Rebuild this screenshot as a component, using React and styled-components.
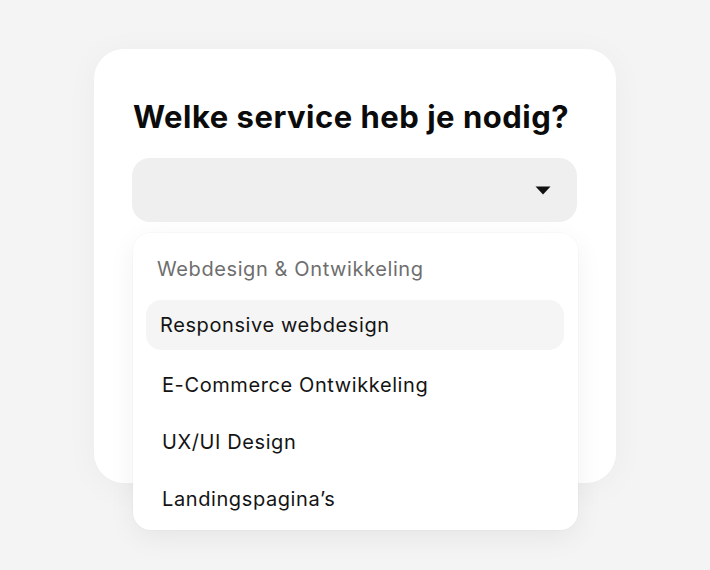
import React from "react";
import styled, { createGlobalStyle } from "styled-components";

const GlobalStyle = createGlobalStyle`
  html, body {
    margin: 0;
    padding: 0;
    background: #f4f4f4;
    font-family: Inter, "Noto Sans", "Liberation Sans", sans-serif;
    color: #111;
  }
`;

const Page = styled.main`
  width: 710px;
  height: 570px;
  padding: 49px 0 0 94px;
  box-sizing: border-box;
  overflow: hidden;
`;

const Card = styled.section`
  width: 522px;
  height: 434px;
  box-sizing: border-box;
  padding: 46px 39px 0 38px;
  background: #fff;
  border-radius: 30px;
  box-shadow: 0 4px 34px rgba(0, 0, 0, 0.04);
`;

const Title = styled.h2`
  margin: 0 0 19px 1px;
  font-size: 31px;
  line-height: 44px;
  font-weight: 700;
  letter-spacing: 0.5px;
  color: #0b0b0b;
`;

const SelectWrap = styled.div`
  position: relative;
`;

const SelectBox = styled.button`
  display: flex;
  align-items: center;
  justify-content: flex-end;
  width: 100%;
  height: 64px;
  padding: 0 26px 0 24px;
  border: none;
  border-radius: 18px;
  background: #efefef;
  cursor: pointer;
`;

const Menu = styled.ul`
  position: absolute;
  top: 75px;
  left: 1px;
  width: 445px;
  box-sizing: border-box;
  margin: 0;
  padding: 24px 14px 6px 13px;
  list-style: none;
  background: #fff;
  border-radius: 18px;
  box-shadow: 0 8px 28px rgba(0, 0, 0, 0.06), 0 0 0 1px rgba(0, 0, 0, 0.015);
  display: flex;
  flex-direction: column;
  gap: 7px;
`;

const GroupLabel = styled.li`
  padding-left: 11px;
  margin-bottom: 12px;
  font-size: 20px;
  line-height: 24px;
  letter-spacing: 0.6px;
  color: #6e6e6e;
`;

const Option = styled.li`
  display: flex;
  align-items: center;
  height: 50px;
  padding-left: ${(p) => (p.$active ? "14px" : "16px")};
  margin-bottom: ${(p) => (p.$active ? "3px" : "0")};
  border-radius: 15px;
  background: ${(p) => (p.$active ? "#f5f5f5" : "transparent")};
  font-size: 20px;
  letter-spacing: 0.6px;
  color: #141414;
`;

const Caret = () => (
  <svg width="16" height="9" viewBox="0 0 16 9" aria-hidden="true">
    <path d="M0.5 0.5 H15.5 L8 8.5 Z" fill="#111" />
  </svg>
);

const options = [
  "Responsive webdesign",
  "E-Commerce Ontwikkeling",
  "UX/UI Design",
  "Landingspagina’s",
];

export default function App() {
  return (
    <>
      <GlobalStyle />
      <Page>
        <Card>
          <Title>Welke service heb je nodig?</Title>
          <SelectWrap>
            <SelectBox aria-label="Kies een service">
              <Caret />
            </SelectBox>
            <Menu>
              <GroupLabel>Webdesign &amp; Ontwikkeling</GroupLabel>
              {options.map((o, i) => (
                <Option key={o} $active={i === 0}>
                  {o}
                </Option>
              ))}
            </Menu>
          </SelectWrap>
        </Card>
      </Page>
    </>
  );
}
